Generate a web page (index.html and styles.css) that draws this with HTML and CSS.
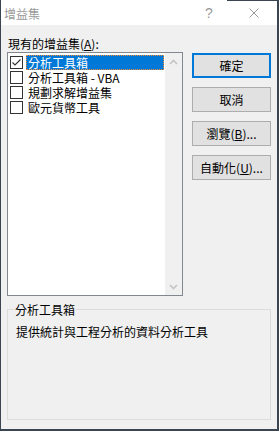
FILE: index.html
```html
<!DOCTYPE html>
<html lang="zh-Hant">
<head>
<meta charset="utf-8">
<title>增益集</title>
<link rel="stylesheet" href="styles.css">
</head>
<body>
<div class="window">
  <div class="titlebar">
    <span class="title">增益集</span>
    <span class="cap-btn help">?</span>
    <span class="cap-btn close">
      <svg width="10" height="10" viewBox="0 0 10 10"><path d="M0.5 0.5 L9.5 9.5 M9.5 0.5 L0.5 9.5" stroke="#9a9a9a" stroke-width="1" fill="none"/></svg>
    </span>
  </div>
  <div class="content">
    <div class="label">現有的增益集(<u>A</u>):</div>
    <div class="main">
      <div class="listbox">
        <ul class="items">
          <li class="item selected">
            <span class="check"><svg width="11" height="11" viewBox="0 0 11 11"><path d="M1.5 5.5 L4 8 L9.5 2.5" stroke="#333" stroke-width="1.1" fill="none"/></svg></span>
            <span class="item-label">分析工具箱</span>
          </li>
          <li class="item"><span class="check"></span><span class="item-label">分析工具箱 - VBA</span></li>
          <li class="item"><span class="check"></span><span class="item-label">規劃求解增益集</span></li>
          <li class="item"><span class="check"></span><span class="item-label">歐元貨幣工具</span></li>
        </ul>
        <div class="scrollbar">
          <span class="sb-btn"><svg width="9" height="6" viewBox="0 0 9 6"><path d="M1 5 L4.5 1.5 L8 5" stroke="#c4c4c4" stroke-width="1.6" fill="none"/></svg></span>
          <span class="sb-btn"><svg width="9" height="6" viewBox="0 0 9 6"><path d="M1 1 L4.5 4.5 L8 1" stroke="#c4c4c4" stroke-width="1.6" fill="none"/></svg></span>
        </div>
      </div>
      <div class="buttons">
        <button class="btn default">確定</button>
        <button class="btn">取消</button>
        <button class="btn">瀏覽(<u>B</u>)...</button>
        <button class="btn">自動化(<u>U</u>)...</button>
      </div>
    </div>
    <fieldset class="group">
      <legend class="group-caption">分析工具箱</legend>
      <p class="desc">提供統計與工程分析的資料分析工具</p>
    </fieldset>
  </div>
</div>
</body>
</html>
```

FILE: styles.css
```css
* { box-sizing: border-box; }
html, body { margin: 0; padding: 0; background: #f0f0f0; }
body {
  font-family: "Noto Sans CJK TC", "Noto Sans", sans-serif;
  font-size: 12px;
  color: #000;
}
.window {
  width: 279px;
  height: 431px;
  background: #f0f0f0;
  border-left: 1px solid #3a4551;
  border-right: 2px solid #3a4551;
  border-bottom: 2px solid #3a4551;
  display: flex;
  flex-direction: column;
}
.titlebar {
  height: 25px;
  flex: none;
  background: #fff;
  display: flex;
  align-items: center;
  position: relative;
}
.titlebar::after {
  content: "";
  position: absolute;
  top: 0;
  left: 226px;
  right: -2px;
  height: 1px;
  background: #3a4551;
}
.title {
  flex: 1;
  color: #9a9a9a;
  padding-left: 3px;
  padding-top: 2px;
  line-height: 15px;
}
.cap-btn {
  width: 46px;
  height: 25px;
  display: flex;
  align-items: center;
  justify-content: center;
}
.help {
  font-family: "Liberation Sans", sans-serif;
  font-size: 14px;
  color: #9a9a9a;
  padding-left: 2px;
}
.close { padding-top: 0; }
.content {
  flex: 1;
  display: flex;
  flex-direction: column;
  padding: 11px 6px 9px 6px;
}
.label {
  line-height: 15px;
  padding-left: 1px;
  margin-bottom: 1px;
}
.main {
  display: flex;
  gap: 9px;
  height: 244px;
  flex: none;
}
.listbox {
  width: 176px;
  border: 1px solid #828790;
  background: #fff;
  display: flex;
}
.items {
  list-style: none;
  margin: 0;
  padding: 2px 0 0 0;
  flex: 1;
}
.item {
  display: flex;
  align-items: center;
  height: 15px;
  padding-left: 2px;
}
.check {
  width: 13px;
  height: 13px;
  border: 1px solid #333;
  background: #fff;
  flex: none;
  margin-right: 3px;
  display: flex;
  align-items: center;
  justify-content: center;
}
.item-label {
  flex: 1;
  height: 15px;
  line-height: 15px;
  padding-left: 2px;
  margin-right: 1px;
  white-space: nowrap;
}
.item.selected .item-label {
  background: #0078d7;
  color: #fff;
  border: 1px dotted #ff8a30;
  line-height: 13px;
  padding-left: 1px;
}
.scrollbar {
  width: 17px;
  flex: none;
  background: #f0f0f0;
  display: flex;
  flex-direction: column;
  justify-content: space-between;
}
.sb-btn {
  height: 17px;
  display: flex;
  align-items: center;
  justify-content: center;
}
.buttons {
  width: 79px;
  display: flex;
  flex-direction: column;
  gap: 9px;
  margin-top: 1px;
}
.btn {
  height: 25px;
  border: 1px solid #adadad;
  background: #e1e1e1;
  font: inherit;
  color: #000;
  padding: 0;
  line-height: 23px;
  text-align: center;
}
.btn.default {
  border: 2px solid #0078d7;
  line-height: 21px;
}
.group {
  flex: 1;
  margin: 6px 0 0 0;
  padding: 0 8px;
  border: 1px solid #dcdcdc;
  min-width: 0;
}
.group-caption {
  padding: 0 1px;
  margin-left: -2px;
  line-height: 15px;
}
.desc {
  margin: 7px 0 0 0;
  line-height: 15px;
}
```
